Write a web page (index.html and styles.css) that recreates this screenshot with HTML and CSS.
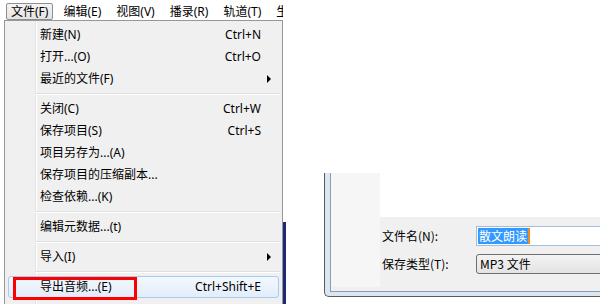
FILE: index.html
```html
<!DOCTYPE html>
<html lang="zh">
<head>
    <meta charset="UTF-8">
    <meta name="viewport" content="width=device-width, initial-scale=1.0">
    <title>导出音频</title>
    <link rel="stylesheet" href="styles.css">
</head>
<body>
    <div class="screen">
        <div class="app">
            <div class="menubar">
                <span class="top-item open">文件(F)</span>
                <span class="top-item">编辑(E)</span>
                <span class="top-item">视图(V)</span>
                <span class="top-item">播录(R)</span>
                <span class="top-item">轨道(T)</span>
                <span class="top-item">生成(G)</span>
            </div>
            <div class="drop">
                <div class="menu">
                    <div class="item"><span class="label">新建(N)</span><span class="key">Ctrl+N</span><span class="sub"></span></div>
                    <div class="item"><span class="label">打开...(O)</span><span class="key">Ctrl+O</span><span class="sub"></span></div>
                    <div class="item"><span class="label">最近的文件(F)</span><span class="sub"><i class="arrow"></i></span></div>
                    <div class="sep"></div>
                    <div class="item"><span class="label">关闭(C)</span><span class="key">Ctrl+W</span><span class="sub"></span></div>
                    <div class="item"><span class="label">保存项目(S)</span><span class="key">Ctrl+S</span><span class="sub"></span></div>
                    <div class="item"><span class="label">项目另存为...(A)</span><span class="sub"></span></div>
                    <div class="item"><span class="label">保存项目的压缩副本...</span><span class="sub"></span></div>
                    <div class="item"><span class="label">检查依赖...(K)</span><span class="sub"></span></div>
                    <div class="sep"></div>
                    <div class="item"><span class="label">编辑元数据...(t)</span><span class="sub"></span></div>
                    <div class="sep"></div>
                    <div class="item"><span class="label">导入(I)</span><span class="sub"><i class="arrow"></i></span></div>
                    <div class="sep"></div>
                    <div class="item active">
                        <span class="label">导出音频...(E)</span><span class="key">Ctrl+Shift+E</span><span class="sub"></span>
                        <div class="mark"></div>
                    </div>
                </div>
                <div class="edge"></div>
            </div>
        </div>

        <div class="dialog">
            <div class="dialog-in">
                <div class="nav"></div>
                <div class="main">
                    <div class="list"></div>
                    <div class="form">
                        <span class="form-label">文件名(N):</span>
                        <div class="field"><span class="sel-text">散文朗读</span></div>
                        <span class="form-label">保存类型(T):</span>
                        <div class="combo">MP3 文件</div>
                    </div>
                </div>
            </div>
        </div>
    </div>
</body>
</html>
```

FILE: styles.css
```css
* { box-sizing: border-box; }
body { margin: 0; background: #fff; color: #000; font: 12px "Noto Sans", "Noto Sans CJK SC", sans-serif; }
.screen { display: flex; width: 600px; height: 304px; overflow: hidden; }

/* 左侧菜单 */
.app { width: 286px; flex-shrink: 0; display: flex; flex-direction: column; }
.menubar { height: 20px; width: 283px; display: flex; gap: 5px; padding: 3px 0 0 6px; overflow: hidden; white-space: nowrap; }
.top-item { height: 17px; line-height: 15px; padding: 0 4px; border: 1px solid transparent; border-radius: 2px; flex-shrink: 0; }
.top-item.open { border-color: #8e8f8f; background: linear-gradient(#f4f4f4, #e3e3e3); }

.drop { flex: 1; display: flex; margin-left: 4px; }
.menu { width: 279px; padding: 3px 3px 0; border: 1px solid #979797; border-bottom: none;
        background: linear-gradient(to right, #f0f0f0 30px, #e2e3e3 30px, #e2e3e3 31px, #fff 31px, #fff 32px, #f0f0f0 32px); }
.edge { width: 3px; margin-top: 202px; background: #1d2a78; }

.item { position: relative; display: flex; align-items: center; height: 22px; line-height: 20px; padding-left: 31px; border: 1px solid transparent; border-radius: 3px; white-space: nowrap; }
.item .label { flex: 1; }
.item .sub { width: 17px; height: 20px; padding-left: 6px; display: flex; align-items: center; }
.arrow { display: block; width: 0; height: 0; border-left: 4px solid #000; border-top: 4px solid transparent; border-bottom: 4px solid transparent; }
.item.active { border-color: #a8caee; background: linear-gradient(#f3f8fd, #e2edfa); }
.mark { position: absolute; left: 4px; top: 0; width: 124px; height: 23px; border: 3px solid #f00; }

.sep { height: 2px; margin: 3px -1px 3px 27px; border-top: 1px solid #e0e0e0; border-bottom: 1px solid #fff; }

/* 右侧保存对话框 */
.dialog { flex: 1; height: 124px; margin: 173px 0 0 38px; padding: 0 0 4px 5px; background: #dbe6f2;
          border-left: 1px solid #5b5b5b; border-bottom: 1px solid #5b5b5b; border-bottom-left-radius: 5px; }
.dialog-in { display: flex; height: 100%; background: #f0f0f0; border-left: 1px solid #8b9bb0; border-bottom: 1px solid #8b9bb0; }
.nav { width: 49px; flex-shrink: 0; margin-bottom: 4px; background: #f6f6f6; }
.main { flex: 1; display: flex; flex-direction: column; }
.list { height: 44px; background: #fff; }
.form { display: grid; grid-template-columns: 94px 160px; row-gap: 8px; align-items: center; padding: 9px 0 0 2px;
        font-family: "Noto Sans CJK SC", sans-serif; }
.form-label { line-height: 16px; }
.field { height: 20px; padding: 1px 0 0 1px; line-height: 16px; background: #fff; border: 1px solid #a3bfdf; }
.sel-text { display: inline-block; padding: 0 1px; color: #fff; background: #3399ff; border-right: 2px solid #ef8a1c; }
.combo { height: 20px; padding-left: 3px; line-height: 18px; border: 1px solid #707070; border-radius: 3px; background: linear-gradient(#f3f3f3, #e3e3e3); }
```
